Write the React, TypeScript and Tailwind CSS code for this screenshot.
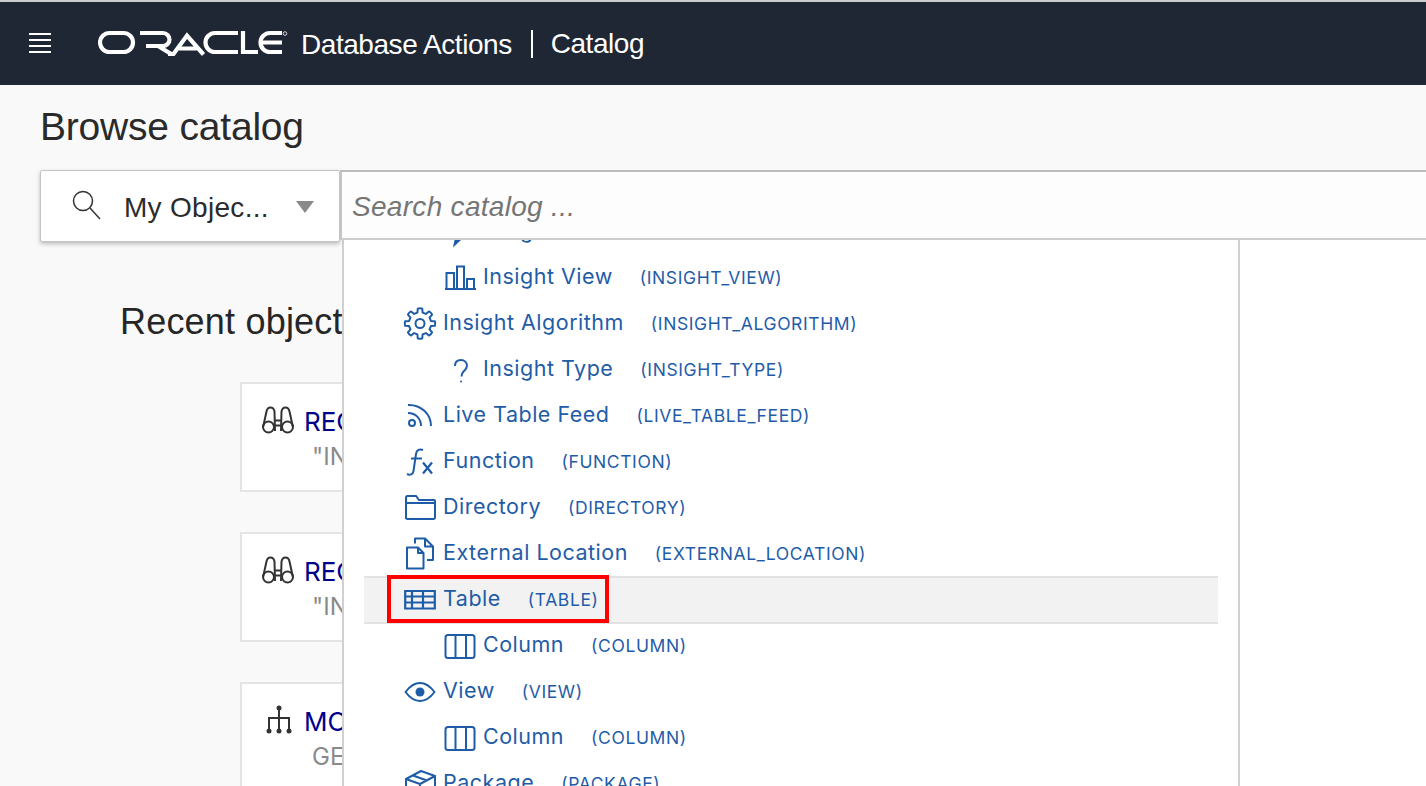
import React from "react";

const Ico = ({ children }: { children: React.ReactNode }) => (
  <svg width={32} height={32} viewBox="0 0 32 32" fill="none" stroke="#1f5ca8" strokeWidth={2} className="shrink-0 overflow-visible">
    {children}
  </svg>
);

const gearPath = (() => {
  const teeth = 8;
  const cx = 16;
  const cy = 16.5;
  const pts: string[] = [];
  for (let t = 0; t < teeth; t++) {
    const a = (t / teeth) * Math.PI * 2 - Math.PI / 2;
    const s = (Math.PI * 2) / teeth;
    const p = (r: number, o: number) =>
      `${(cx + r * Math.cos(a + o * s)).toFixed(2)} ${(cy + r * Math.sin(a + o * s)).toFixed(2)}`;
    pts.push(`${t === 0 ? "M" : "L"}${p(11.2, -0.3)} L${p(15, -0.19)} Q${p(15.8, 0)} ${p(15, 0.19)} L${p(11.2, 0.3)}`);
  }
  return pts.join(" ") + "Z";
})();

const icons: Record<string, React.ReactNode> = {
  pen: <path d="M9 32.500L10.500 25H17z" fill="#1f5ca8" stroke="none" />,
  bars: <path d="M1 28H32M2.500 28V12H10V28M13 28V5.500H20V28M23 28V18H30V28" />,
  gear: (
    <g>
      <circle cx="16" cy="16.500" r="4.500" />
      <path d={gearPath} strokeLinejoin="round" />
    </g>
  ),
  question: (
    <g>
      <path d="M11 13c0-4 2.500-6 6-6 3.500 0 6 2.500 6 5.500 0 3-2 4.500-3.500 6-1.300 1.300-2 2.500-2 5" />
      <circle cx="17" cy="28.500" r="1" fill="#1f5ca8" stroke="none" />
    </g>
  ),
  rss: (
    <g>
      <circle cx="8" cy="24" r="3" />
      <path d="M4 14c8 0 13 6 13 13" />
      <path d="M4 6c13-.5 23 9 23 21" />
    </g>
  ),
  fx: (
    <g>
      <path d="M3 29c3 1.500 6 .5 6.500-3L12 9c.6-4 3.500-5.500 7-4" />
      <path d="M7 13.500H18" />
      <path d="M19 17.500l9 11M28 17.500l-9 11" strokeWidth={2.200} />
    </g>
  ),
  folder: <path d="M2 28V6.500A1.500 1.500 0 0 1 3.500 5H12l3 4H30a1 1 0 0 1 1 1v16.500a1.500 1.500 0 0 1-1.500 1.500H3.500A1.500 1.500 0 0 1 2 26.500zM2 12H31" />,
  files: (
    <g strokeLinejoin="round">
      <path d="M3 10.500V31.500H19.500V16L14 10.500zM14 10.500V16H19.500" />
      <path d="M11 6.500V1.500h10l8 8V23H23M21 1.500V9.500H29" />
    </g>
  ),
  table: (
    <path d="M1.200 8H30.800V25.500H1.200zM1.200 13.500H30.800M1.200 19.500H30.800M8 8V25.500M19 8V25.500" strokeWidth={2.200} />
  ),
  column: (
    <g>
      <rect x="1.500" y="6" width="29" height="23" rx="2.500" />
      <path d="M11.500 6V29M22 6V29" />
    </g>
  ),
  eye: (
    <g>
      <path d="M1.500 17C6 11 11 8 16 8s10 3 14.500 9C26 23 21 26 16 26S6 23 1.500 17z" strokeLinejoin="round" />
      <circle cx="16" cy="17" r="4.500" fill="#1f5ca8" stroke="none" />
    </g>
  ),
  box: (
    <g strokeLinejoin="round">
      <path d="M2 12L17 4 31 9 16 17zM2 12v14l14 6V17M31 9v15l-15 8M9 8.500l14 5" />
    </g>
  ),
};

const rows = [
  { i: "pen", n: "Insight Bar", c: "(INSIGHT_BAR)", l: 1 },
  { i: "bars", n: "Insight View", c: "(INSIGHT_VIEW)", l: 1 },
  { i: "gear", n: "Insight Algorithm", c: "(INSIGHT_ALGORITHM)", l: 0 },
  { i: "question", n: "Insight Type", c: "(INSIGHT_TYPE)", l: 1 },
  { i: "rss", n: "Live Table Feed", c: "(LIVE_TABLE_FEED)", l: 0 },
  { i: "fx", n: "Function", c: "(FUNCTION)", l: 0 },
  { i: "folder", n: "Directory", c: "(DIRECTORY)", l: 0 },
  { i: "files", n: "External Location", c: "(EXTERNAL_LOCATION)", l: 0 },
  { i: "table", n: "Table", c: "(TABLE)", l: 0, active: true },
  { i: "column", n: "Column", c: "(COLUMN)", l: 1 },
  { i: "eye", n: "View", c: "(VIEW)", l: 0 },
  { i: "column", n: "Column", c: "(COLUMN)", l: 1 },
  { i: "box", n: "Package", c: "(PACKAGE)", l: 0 },
];

const Card = ({ icon, title, sub }: { icon: React.ReactNode; title: string; sub: string }) => (
  <div className="h-[110px] border-2 border-[#e4e4e4] bg-white pl-[20px] pt-[20px] flex gap-[10px]">
    <div className="w-[32px] h-[32px] shrink-0 mt-[1px]">{icon}</div>
    <div>
      <div className="text-[26px] leading-[36px] text-[#00008b]">{title}</div>
      <div className="text-[24px] leading-[32px] mt-[1px] text-[#8a8a8a] ml-[8px]">{sub}</div>
    </div>
  </div>
);

const Binoculars = () => (
  <svg width="32" height="32" viewBox="0 0 32 32" fill="none" stroke="#333" strokeWidth={2}>
    <circle cx="6.500" cy="22" r="5.500" />
    <circle cx="25.500" cy="22" r="5.500" />
    <path d="M1.200 21.500L4.500 6.500c.5-2.500 2-4 4-4s3.500 1.500 4 4L13 26M30.800 21.500L27.500 6.500c-.5-2.500-2-4-4-4s-3.500 1.500-4 4L19 26M13 15.500h6M13 20.500h6" />
  </svg>
);

const Tree = () => (
  <svg width="32" height="32" viewBox="0 0 32 32" fill="#333" stroke="#333" strokeWidth={2}>
    <circle cx="17" cy="3" r="2.500" stroke="none" />
    <circle cx="7" cy="26" r="2.500" stroke="none" />
    <circle cx="17" cy="26" r="2.500" stroke="none" />
    <circle cx="27" cy="26" r="2.500" stroke="none" />
    <path d="M17 3V26M7 26V13H27V26" fill="none" />
  </svg>
);

const Logo = () => (
  <svg width="198" height="30" viewBox="0 0 198 30" fill="none" stroke="#fff" strokeWidth={4.200} className="shrink-0">
    <title>ORACLE</title>
    <rect x="2" y="5" width="33" height="19" rx="9.500" />
    <path d="M42 5H65a6.500 6.500 0 0 1 0 13H48M60 18L74 26.500" />
    <path d="M70 26H75.500L89 7.500 105.500 26.500M80 20.500H100" />
    <path d="M140 5H117a9.500 9.500 0 0 0 0 19H140" />
    <path d="M145 3V24H160" />
    <path d="M184 5H172a9.500 9.500 0 0 0 0 19H184M164 14.500H184" />
    <circle cx="187" cy="5.500" r="1.800" strokeWidth={0.800} />
  </svg>
);

export default function App() {
  return (
    <div className="relative w-[1426px] h-[786px] overflow-hidden bg-[#f9f9f9] font-['Inter',sans-serif]">
      <div className="h-[2px] bg-[#c9cbcc]" />
      <header className="h-[83px] bg-[#1f2735] flex items-center pl-[29px] text-white font-['Liberation_Sans',sans-serif]">
        <div className="w-[22px] flex flex-col gap-[4px] mr-[47px] -mt-[2px]">
          <div className="h-[2px] bg-white" />
          <div className="h-[2px] bg-white" />
          <div className="h-[2px] bg-white" />
          <div className="h-[2px] bg-white" />
        </div>
        <div className="-mt-[1px]"><Logo /></div>
        <span className="ml-[5px] mt-[3px] text-[28px] leading-[36px] tracking-[-0.45px] whitespace-nowrap">Database Actions</span>
        <div className="w-[2px] h-[28px] bg-white ml-[19px] mr-[18px]" />
        <span className="mt-[1px] text-[28px] leading-[36px] tracking-[-0.45px]">Catalog</span>
      </header>

      <main>
        <h1 className="ml-[40px] mt-[17px] h-[50px] text-[39px] leading-[50px] tracking-[-0.2px] text-[#2a2a2a] font-['Liberation_Sans',sans-serif]">Browse catalog</h1>
        <div className="flex mt-[18px] pl-[40px] items-start">
          <div className="w-[300px] h-[72px] bg-white border border-[#c4c4c4] rounded-[2px] shadow-[0_2px_4px_rgba(0,0,0,0.25)] flex items-center pl-[29px] relative z-20">
            <svg width="32" height="32" viewBox="0 0 32 32" fill="none" stroke="#333" strokeWidth={1.500} className="-mt-[2px]">
              <circle cx="13" cy="12" r="9.500" />
              <path d="M20 19L30 30" />
            </svg>
            <span className="ml-[22px] mt-[3px] text-[28px] tracking-[0.3px] text-[#2b2b2b] whitespace-nowrap font-['Liberation_Sans',sans-serif]">My Objec...</span>
            <div className="ml-[27px] mt-[2px] w-0 h-0 border-l-[9px] border-r-[9px] border-t-[12px] border-l-transparent border-r-transparent border-t-[#8a8a8a]" />
          </div>
          <div className="flex-1 h-[70px] bg-[#fdfdfd] border-t-2 border-l-2 border-b-2 border-t-[#bbbbbb] border-l-[#c4c4c4] border-b-[#cccccc] flex items-center pl-[10px] relative z-20">
            <span className="mt-[4px] text-[28px] tracking-[0.3px] italic text-[#757575] font-['Liberation_Sans',sans-serif]">Search catalog ...</span>
          </div>
        </div>
        <h2 className="ml-[120px] mt-[55px] h-[49px] text-[36px] leading-[50px] tracking-[0.2px] text-[#262626] whitespace-nowrap font-['Liberation_Sans',sans-serif]">Recent objects</h2>
        <div className="ml-[240px] w-[900px] mt-[36px] flex flex-col gap-[40px]">
          <Card icon={<Binoculars />} title="REGIONS_INSIGHTS" sub={'"INSIGHT"'} />
          <Card icon={<Binoculars />} title="REGIONS_INSIGHTS" sub={'"INSIGHT"'} />
          <Card icon={<Tree />} title="MOVIE_SALES" sub="GENERATED" />
        </div>
      </main>

      <div className="absolute left-[342px] right-0 top-[240px] bottom-0 z-10 flex bg-white">
        <div className="w-[898px] h-full border-l-2 border-r-2 border-[#d0d0d0] overflow-hidden pl-[20px] pr-[20px]">
          <div className="-mt-[32px] text-[#1f5ca8]">
            {rows.map((r, k) => (
              <div
                key={k}
                className={
                  r.active
                    ? "h-[48px] -mb-[2px] pb-[2px] flex items-center pl-[40px] bg-[#f2f2f2] border-y-2 border-[#e2e2e2] relative"
                    : "h-[46px] flex items-center pl-[40px]"
                }
              >
                {r.l === 1 ? <div className="w-[40px] shrink-0" /> : null}
                <Ico>{icons[r.i]}</Ico>
                <span className="ml-[7px] text-[21.500px] leading-[30px] -mt-[2px] whitespace-nowrap tracking-[0.5px]">{r.n}</span>
                <span className="ml-[27px] mt-[1px] text-[17.500px] leading-[24px] whitespace-nowrap tracking-[0.6px]">{r.c}</span>
                {r.active ? (
                  <div className="absolute left-[23px] top-[-3px] w-[222px] h-[48px] border-[4px] border-[#ff0000]" />
                ) : null}
              </div>
            ))}
          </div>
        </div>
      </div>
    </div>
  );
}
